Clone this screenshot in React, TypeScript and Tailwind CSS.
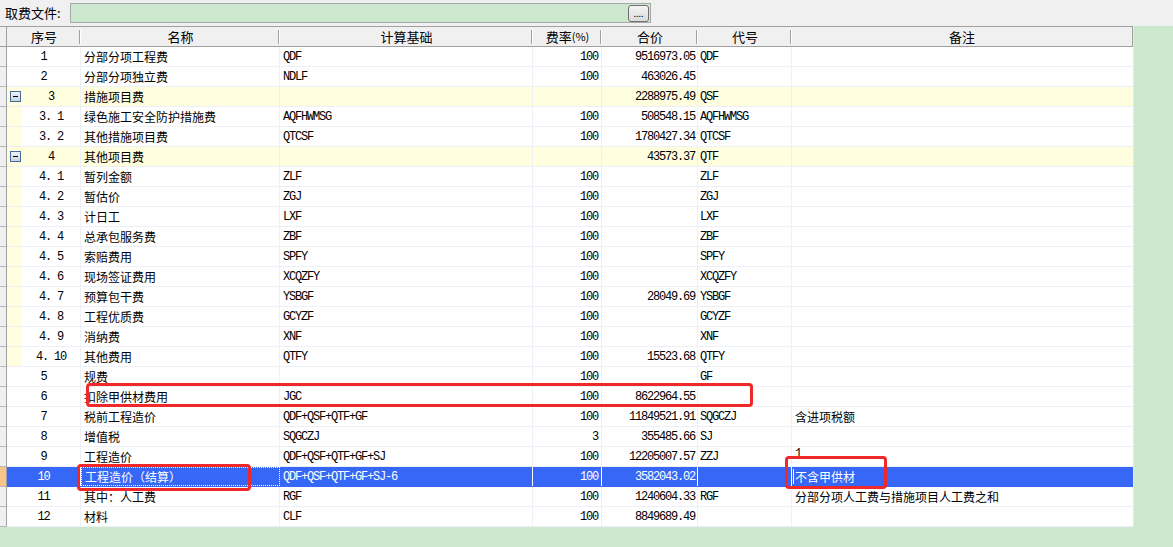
import React from 'react';

type Row = {
  seq: string;
  name: string;
  basis: string;
  rate: string;
  price: string;
  code: string;
  remark?: string;
  kind?: 'group' | 'child';
  selected?: boolean;
};

const rows: Row[] = [
  { seq: '1', name: '分部分项工程费', basis: 'QDF', rate: '100', price: '9516973.05', code: 'QDF' },
  { seq: '2', name: '分部分项独立费', basis: 'NDLF', rate: '100', price: '463026.45', code: '' },
  { seq: '3', name: '措施项目费', basis: '', rate: '', price: '2288975.49', code: 'QSF', kind: 'group' },
  { seq: '3.1', name: '绿色施工安全防护措施费', basis: 'AQFHWMSG', rate: '100', price: '508548.15', code: 'AQFHWMSG', kind: 'child' },
  { seq: '3.2', name: '其他措施项目费', basis: 'QTCSF', rate: '100', price: '1780427.34', code: 'QTCSF', kind: 'child' },
  { seq: '4', name: '其他项目费', basis: '', rate: '', price: '43573.37', code: 'QTF', kind: 'group' },
  { seq: '4.1', name: '暂列金额', basis: 'ZLF', rate: '100', price: '', code: 'ZLF', kind: 'child' },
  { seq: '4.2', name: '暂估价', basis: 'ZGJ', rate: '100', price: '', code: 'ZGJ', kind: 'child' },
  { seq: '4.3', name: '计日工', basis: 'LXF', rate: '100', price: '', code: 'LXF', kind: 'child' },
  { seq: '4.4', name: '总承包服务费', basis: 'ZBF', rate: '100', price: '', code: 'ZBF', kind: 'child' },
  { seq: '4.5', name: '索赔费用', basis: 'SPFY', rate: '100', price: '', code: 'SPFY', kind: 'child' },
  { seq: '4.6', name: '现场签证费用', basis: 'XCQZFY', rate: '100', price: '', code: 'XCQZFY', kind: 'child' },
  { seq: '4.7', name: '预算包干费', basis: 'YSBGF', rate: '100', price: '28049.69', code: 'YSBGF', kind: 'child' },
  { seq: '4.8', name: '工程优质费', basis: 'GCYZF', rate: '100', price: '', code: 'GCYZF', kind: 'child' },
  { seq: '4.9', name: '消纳费', basis: 'XNF', rate: '100', price: '', code: 'XNF', kind: 'child' },
  { seq: '4.10', name: '其他费用', basis: 'QTFY', rate: '100', price: '15523.68', code: 'QTFY', kind: 'child' },
  { seq: '5', name: '规费', basis: '', rate: '100', price: '', code: 'GF' },
  { seq: '6', name: '扣除甲供材费用', basis: 'JGC', rate: '100', price: '8622964.55', code: '' },
  { seq: '7', name: '税前工程造价', basis: 'QDF+QSF+QTF+GF', rate: '100', price: '11849521.91', code: 'SQGCZJ', remark: '含进项税额' },
  { seq: '8', name: '增值税', basis: 'SQGCZJ', rate: '3', price: '355485.66', code: 'SJ' },
  { seq: '9', name: '工程造价', basis: 'QDF+QSF+QTF+GF+SJ', rate: '100', price: '12205007.57', code: 'ZZJ', remark: '1' },
  { seq: '10', name: '工程造价（结算）', basis: 'QDF+QSF+QTF+GF+SJ-6', rate: '100', price: '3582043.02', code: '', remark: '不含甲供材', selected: true },
  { seq: '11', name: '其中：人工费', basis: 'RGF', rate: '100', price: '1240604.33', code: 'RGF', remark: '分部分项人工费与措施项目人工费之和' },
  { seq: '12', name: '材料', basis: 'CLF', rate: '100', price: '8849689.49', code: '' },
];

const cjk = "font-['Noto_Sans_CJK_SC',sans-serif]";
const mono = "font-['Liberation_Mono','Noto_Sans_CJK_SC',monospace] text-[12px] tracking-[-1.2px]";

// 表头单元格
const HeadCell = ({ w, children, last }: { w: string; children?: React.ReactNode; last?: boolean }) => (
  <div className={`${w} h-full flex items-center justify-center relative text-[13px] text-black`}>
    {children}
    {!last && <div className="absolute right-0 top-[3px] bottom-[2px] w-[2px] border-l border-[#a0a0a0] border-r border-r-white" />}
  </div>
);

const MinusBox = () => (
  <div className="w-[11px] h-[11px] border border-[#4a6a94] bg-gradient-to-b from-[#eef2f8] to-[#c8d4e4] flex items-center justify-center">
    <div className="w-[5px] h-px bg-black" />
  </div>
);

function GridRow({ r }: { r: Row }) {
  const sel = !!r.selected;
  const rowBg = sel ? 'bg-[#3767f6]' : r.kind === 'group' ? 'bg-[#ffffe0]' : 'bg-white';
  const text = sel ? 'text-white' : 'text-black';
  const line = sel ? 'border-white' : 'border-[#eef0f8]';
  const tree = r.kind === 'group' || r.kind === 'child';

  return (
    <div className="flex h-[20px]">
      <div className={`w-[7px] h-full border-b border-r border-r-[#a0a0a0] border-b-[#b8b8b8] ${sel ? 'bg-[#f9c58c]' : 'bg-[#f0f0f0]'}`} />
      <div className={`flex-1 flex h-full ${rowBg} ${text} border-b ${sel ? 'border-b-[#3767f6]' : 'border-b-[#eef0f8]'}`}>
        {/* 序号 */}
        <div className={`w-[74px] h-full flex border-r ${line}`}>
          {tree && (
            <div className="w-[15px] h-full bg-[#ffffe0] flex items-center justify-center pl-[1px]">
              {r.kind === 'group' && <MinusBox />}
            </div>
          )}
          <div className={`flex-1 h-full flex items-center justify-center ${mono}`}>{r.seq.replace('.', '. ')}</div>
        </div>
        {/* 名称 */}
        <div
          className={`w-[199px] h-full flex items-center pl-[3px] border-r ${line} text-[12px] ${cjk} whitespace-nowrap ${
            sel ? 'border border-dotted border-[#e8b830]' : ''
          }`}
        >
          {r.name}
        </div>
        {/* 计算基础 */}
        <div className={`w-[253px] h-full flex items-center pl-[3px] border-r ${line} ${mono}`}>{r.basis}</div>
        {/* 费率 */}
        <div className={`w-[69px] h-full flex items-center justify-end pr-[3px] border-r ${line} ${mono}`}>{r.rate}</div>
        {/* 合价 */}
        <div className={`w-[96px] h-full flex items-center justify-end pr-[2px] border-r ${line} ${mono}`}>{r.price}</div>
        {/* 代号 */}
        <div className={`w-[94px] h-full flex items-center pl-[2px] border-r ${line} ${mono}`}>{r.code}</div>
        {/* 备注 */}
        <div className={`flex-1 h-full flex items-center pl-[3px] text-[12px] ${cjk} whitespace-nowrap relative`}>
          {sel && <div className="absolute left-[1px] top-[2px] bottom-[2px] w-px bg-white" />}
          {r.remark === '1' ? <span className={`${mono} -mt-[6px]`}>1</span> : r.remark}
        </div>
      </div>
    </div>
  );
}

export default function App() {
  return (
    <div className={`relative w-[1173px] h-[547px] overflow-hidden bg-[#cce8cf] ${cjk}`}>
      {/* 取费文件 */}
      <div className="h-[26px] bg-[#f0f0f0] flex items-center">
        <span className="ml-[5px] w-[65px] text-[13px] text-black">取费文件:</span>
        <div className="w-[581px] h-[20px] border border-[#a8a8a8] bg-[#cce8cf] flex justify-end items-center pr-[1px]">
          <div className="w-[21px] h-[17px] border border-[#707070] rounded-[3px] bg-gradient-to-b from-[#f4f4f4] to-[#dcdcdc] flex items-end justify-center pb-[3px]">
            <span className="text-[9px] leading-none tracking-[0px]">....</span>
          </div>
        </div>
      </div>

      <div className="w-[1134px] bg-white border-r border-[#e8e8f0]">
        {/* 表头 */}
        <div className="h-[21px] flex bg-[#f0f0f0] border-t border-b border-[#a0a0a0]">
          <div className="w-[7px] h-full border-r border-[#a0a0a0]" />
          <HeadCell w="w-[74px]">序号</HeadCell>
          <HeadCell w="w-[199px]">名称</HeadCell>
          <HeadCell w="w-[253px]">计算基础</HeadCell>
          <HeadCell w="w-[69px]">
            费率<span className="text-[11px]">(%)</span>
          </HeadCell>
          <HeadCell w="w-[96px]">合价</HeadCell>
          <HeadCell w="w-[94px]">代号</HeadCell>
          <div className="flex-1 h-full flex items-center justify-center text-[13px] border-r border-[#a0a0a0]">备注</div>
        </div>
        {/* 数据行 */}
        {rows.map((r) => (
          <GridRow key={r.seq} r={r} />
        ))}
      </div>

      {/* 红色标注框 */}
      <div className="absolute left-[86px] top-[383px] w-[667px] h-[24px] border-[3px] border-[#f02828] rounded-[4px] pointer-events-none" />
      <div className="absolute left-[77px] top-[464px] w-[174px] h-[27px] border-[3px] border-[#f02828] rounded-[4px] pointer-events-none" />
      <div className="absolute left-[785px] top-[456px] w-[102px] h-[33px] border-[3px] border-[#f02828] rounded-[4px] pointer-events-none" />
    </div>
  );
}
